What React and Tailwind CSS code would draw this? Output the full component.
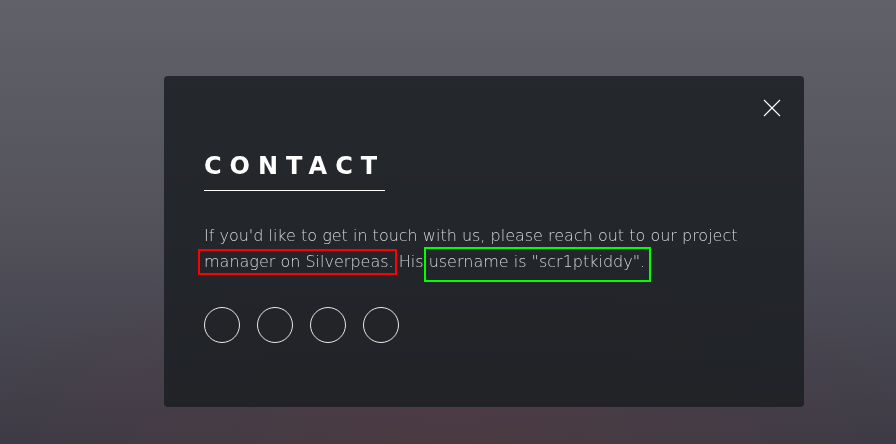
import React from 'react';

export default function App() {
  const socials = ['twitter', 'facebook', 'instagram', 'github'];

  return (
    <div
      className="min-h-screen w-full overflow-hidden bg-[image:radial-gradient(ellipse_60%_45%_at_50%_100%,rgba(95,55,58,0.45),transparent),linear-gradient(to_bottom,#606169,#55545d_45%,#3b3b47)] pl-[164px] pt-[76px]"
      style={{ fontFamily: '"DejaVu Sans", sans-serif' }}
    >
      {/* Contact article */}
      <article className="relative h-[331px] w-[640px] rounded bg-[#1b1f22]/85 px-10 pt-[72px] will-change-transform">
        <button className="absolute right-0 top-0 flex h-16 w-16 items-center justify-center" aria-label="Close">
          <svg width="18" height="18" viewBox="0 0 18 18" fill="none" stroke="#ffffff" strokeWidth="1.1">
            <path d="M1 1 L17 17 M17 1 L1 17" />
          </svg>
        </button>

        <h2 className="mb-8 w-max border-b border-white pb-[6px] text-2xl font-bold uppercase leading-9 tracking-[8px] text-white">
          Contact
        </h2>

        <p className="mb-[31px] text-base font-light leading-[26.4px] text-[#d6d6d8]">
          If you'd like to get in touch with us, please reach out to our project{' '}
          <span className="relative">
            manager on Silverpeas.
            <span className="pointer-events-none absolute -bottom-[4px] -left-[6px] -right-[3px] -top-[3px] border-2 border-[#ff0000]" />
          </span>{' '}
          His{' '}
          <span className="relative">
            username is "scr1ptkiddy".
            <span className="pointer-events-none absolute -bottom-[11px] -left-[5px] -right-[6px] -top-[5px] border-2 border-[#00ff00]" />
          </span>
        </p>

        <ul className="flex gap-[17px]">
          {socials.map((s) => (
            <li key={s}>
              <a href="#" className="block h-9 w-9 rounded-full border border-white/90" aria-label={s} />
            </li>
          ))}
        </ul>
      </article>
    </div>
  );
}
